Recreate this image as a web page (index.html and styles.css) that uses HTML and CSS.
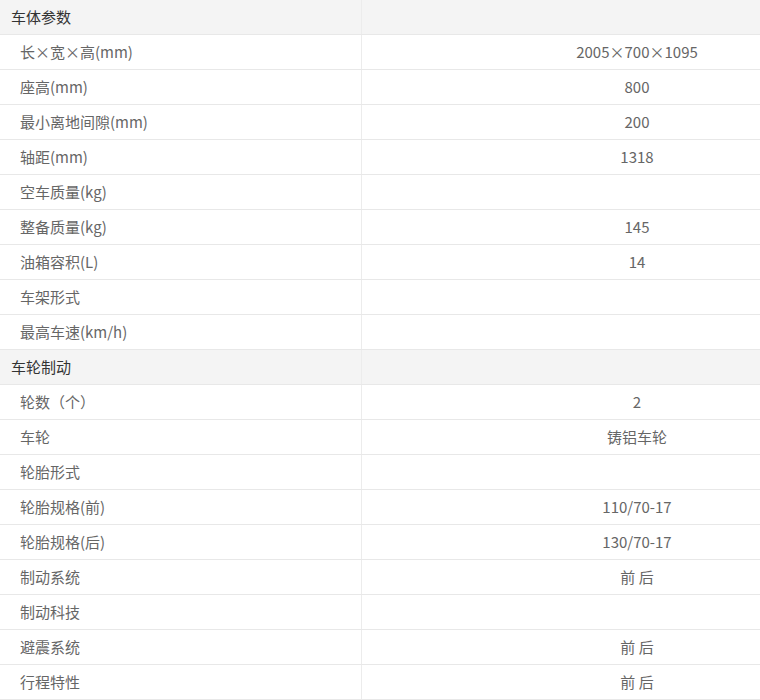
FILE: index.html
```html
<!DOCTYPE html>
<html lang="zh">
<head>
<meta charset="utf-8">
<link rel="stylesheet" href="styles.css">
</head>
<body>
<table class="spec">
<tbody>
<tr class="sec"><td class="k">车体参数</td><td class="v"></td></tr>
<tr><td class="k">长×宽×高(mm)</td><td class="v">2005×700×1095</td></tr>
<tr><td class="k">座高(mm)</td><td class="v">800</td></tr>
<tr><td class="k">最小离地间隙(mm)</td><td class="v">200</td></tr>
<tr><td class="k">轴距(mm)</td><td class="v">1318</td></tr>
<tr><td class="k">空车质量(kg)</td><td class="v"></td></tr>
<tr><td class="k">整备质量(kg)</td><td class="v">145</td></tr>
<tr><td class="k">油箱容积(L)</td><td class="v">14</td></tr>
<tr><td class="k">车架形式</td><td class="v"></td></tr>
<tr><td class="k">最高车速(km/h)</td><td class="v"></td></tr>
<tr class="sec"><td class="k">车轮制动</td><td class="v"></td></tr>
<tr><td class="k">轮数（个）</td><td class="v">2</td></tr>
<tr><td class="k">车轮</td><td class="v">铸铝车轮</td></tr>
<tr><td class="k">轮胎形式</td><td class="v"></td></tr>
<tr><td class="k">轮胎规格(前)</td><td class="v">110/70-17</td></tr>
<tr><td class="k">轮胎规格(后)</td><td class="v">130/70-17</td></tr>
<tr><td class="k">制动系统</td><td class="v">前 后</td></tr>
<tr><td class="k">制动科技</td><td class="v"></td></tr>
<tr><td class="k">避震系统</td><td class="v">前 后</td></tr>
<tr><td class="k">行程特性</td><td class="v">前 后</td></tr>
</tbody>
</table>
</body>
</html>
```
FILE: styles.css
```css
html, body {
  margin: 0;
  padding: 0;
  background: #fff;
}
body {
  font-family: "Noto Sans CJK SC", "Noto Sans", sans-serif;
  font-size: 15px;
  color: #666;
}
.spec {
  width: 760px;
  border-collapse: collapse;
  table-layout: fixed;
}
.spec td {
  height: 34px;
  padding: 0;
  border-bottom: 1px solid #e8e8e8;
  line-height: 34px;
  white-space: nowrap;
  overflow: hidden;
}
.spec td.k {
  width: 341px;
  padding-left: 20px;
  border-right: 1px solid #ececec;
}
.spec td.v {
  text-align: center;
  padding-left: 152px;
}
.spec tr.sec td {
  background: #f4f4f4;
  color: #333;
}
.spec tr.sec td.k {
  padding-left: 11px;
  width: 350px;
}
```
